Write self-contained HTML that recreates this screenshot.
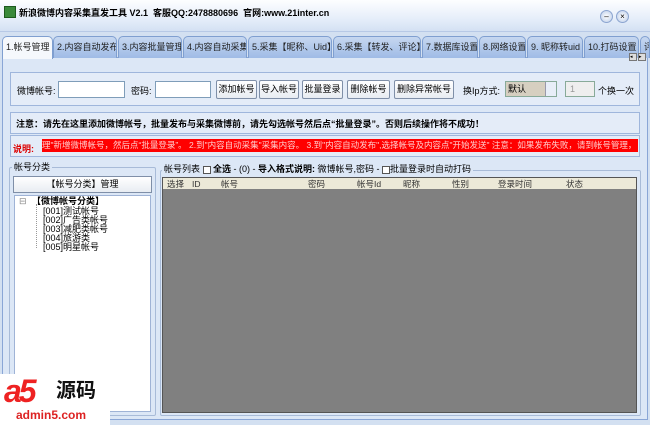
<!DOCTYPE html>
<html><head><meta charset="utf-8"><style>
*{margin:0;padding:0;box-sizing:border-box}
body{width:650px;height:425px;overflow:hidden;background:#d3e0f1;font-family:"Liberation Sans","Noto Sans CJK SC",sans-serif;font-size:9px;color:#000;position:relative}
.a{position:absolute}
.title{left:0;top:0;width:650px;height:32px;background:linear-gradient(#fdfeff,#e6eefa 60%,#d4e1f3);border-bottom:1px solid #b7c9e6}
.tab{position:absolute;top:36px;height:22px;background:linear-gradient(#c6d7f0,#9fbbe6);border:1px solid #7f9fd0;border-bottom:none;border-radius:5px 5px 0 0;font-size:9px;line-height:20px;padding-left:3px;white-space:nowrap;overflow:hidden;color:#222}
.panel{left:2px;top:57px;width:646px;height:363px;background:#dce7f6;border:1px solid #8aa6d6}
.box{position:absolute;border:1px solid #9fb6dc;background:#e4ecf8}
.inp{position:absolute;height:17px;background:#fff;border:1px solid #7f9db9}
.btn{position:absolute;top:80px;height:19px;border:1px solid #7f8fa8;border-radius:2px;background:linear-gradient(#fff,#e8ecf2);text-align:center;line-height:17px;font-size:9px}
.grp{position:absolute;border:1px solid #a8bbd8;border-radius:2px}
.lbl{position:absolute;background:#dce7f6;padding:0 2px;font-size:9px;line-height:11px}
.th{position:absolute;top:179px;font-size:8.5px;color:#333;line-height:10px}
.tree div{position:absolute;font-size:9px;white-space:nowrap;line-height:10px}
</style></head><body>
<div class="a title"></div>
<div class="a" style="left:4px;top:6px;width:12px;height:12px;background:#3a8a3a;border:1px solid #1d5a1d"></div>
<div class="a" style="left:19px;top:6px;font-size:9px;font-weight:bold;white-space:nowrap">新浪微博内容采集直发工具 V2.1 &nbsp;客服QQ:2478880696 &nbsp;官网:www.21inter.cn</div>
<div class="a" style="left:600px;top:10px;width:13px;height:13px;border-radius:50%;background:radial-gradient(#fff,#b9cbe8);border:1px solid #8ca5d0;font-size:8px;text-align:center;line-height:11px">–</div>
<div class="a" style="left:616px;top:10px;width:13px;height:13px;border-radius:50%;background:radial-gradient(#fff,#b9cbe8);border:1px solid #8ca5d0;font-size:8px;text-align:center;line-height:11px">×</div>

<div class="a panel"></div>
<div class="tab" style="left:2px;width:51px;background:#f5f8fc;height:23px;z-index:2">1.帐号管理</div>
<div class="tab" style="left:53px;width:64px">2.内容自动发布</div>
<div class="tab" style="left:118px;width:64px">3.内容批量管理</div>
<div class="tab" style="left:183px;width:64px">4.内容自动采集</div>
<div class="tab" style="left:248px;width:84px">5.采集【昵称、Uid】</div>
<div class="tab" style="left:333px;width:88px">6.采集【转发、评论】</div>
<div class="tab" style="left:422px;width:56px">7.数据库设置</div>
<div class="tab" style="left:479px;width:47px">8.网络设置</div>
<div class="tab" style="left:527px;width:56px">9. 昵称转uid</div>
<div class="tab" style="left:584px;width:55px">10.打码设置</div>
<div class="tab" style="left:640px;width:10px">评</div>
<div class="a" style="left:629px;top:53px;width:8px;height:8px;background:#ddd;border:1px solid #777;font-size:5px;line-height:6px">◂</div>
<div class="a" style="left:638px;top:53px;width:8px;height:8px;background:#ddd;border:1px solid #777;font-size:5px;line-height:6px">▸</div>

<div class="box" style="left:10px;top:72px;width:630px;height:34px"></div>
<div class="a" style="left:17px;top:84px">微博帐号:</div>
<div class="inp" style="left:58px;top:81px;width:67px"></div>
<div class="a" style="left:131px;top:84px">密码:</div>
<div class="inp" style="left:155px;top:81px;width:56px"></div>
<div class="btn" style="left:216px;width:41px">添加帐号</div>
<div class="btn" style="left:259px;width:40px">导入帐号</div>
<div class="btn" style="left:302px;width:41px">批量登录</div>
<div class="btn" style="left:347px;width:43px">删除帐号</div>
<div class="btn" style="left:394px;width:60px">删除异常帐号</div>
<div class="a" style="left:463px;top:84px">换Ip方式:</div>
<div class="a" style="left:505px;top:81px;width:52px;height:16px;background:#d6cfc0;border:1px solid #8a9;padding-left:2px;line-height:14px">默认</div>
<div class="a" style="left:545px;top:82px;width:11px;height:14px;background:#e8eef8;border-left:1px solid #99a"></div>
<div class="a" style="left:565px;top:81px;width:30px;height:16px;background:#eee;border:1px solid #8a9;color:#999;padding-left:4px;line-height:14px">1</div>
<div class="a" style="left:598px;top:84px">个换一次</div>

<div class="box" style="left:10px;top:112px;width:630px;height:22px"></div>
<div class="a" style="left:16px;top:117px;font-weight:bold;white-space:nowrap">注意：请先在这里添加微博帐号，批量发布与采集微博前，请先勾选帐号然后点“批量登录”。否则后续操作将不成功！</div>
<div class="box" style="left:10px;top:135px;width:630px;height:22px"></div>
<div class="a" style="left:13px;top:142px;color:#d00;font-weight:bold">说明:</div>
<div class="a" style="left:42px;top:139px;width:596px;height:13px;background:#f00;color:#fcc;font-size:8.5px;line-height:13px;white-space:nowrap;overflow:hidden">理"新增微博帐号，然后点“批量登录”。 2.到"内容自动采集"采集内容。 3.到"内容自动发布",选择帐号及内容点"开始发送" 注意：如果发布失败，请到帐号管理，</div>

<div class="grp" style="left:9px;top:167px;width:147px;height:249px"></div>
<div class="lbl" style="left:12px;top:162px">帐号分类</div>
<div class="a" style="left:13px;top:176px;width:139px;height:17px;border:1px solid #7f8fa8;background:linear-gradient(#fff,#e8ecf2);text-align:center;line-height:15px">【帐号分类】管理</div>
<div class="a" style="left:14px;top:195px;width:137px;height:217px;background:#fff;border:1px solid #9fb3d6"></div>
<div class="tree">
<div style="left:19px;top:196px;color:#888">⊟</div>
<div style="left:32px;top:196px;font-weight:bold">【微博帐号分类】</div>
<div style="left:43px;top:206px">[001]测试帐号</div>
<div style="left:43px;top:215px">[002]广告类帐号</div>
<div style="left:43px;top:224px">[003]减肥类帐号</div>
<div style="left:43px;top:233px">[004]旅游类</div>
<div style="left:43px;top:242px">[005]明星帐号</div>
</div>
<div class="a" style="left:36px;top:204px;width:1px;height:44px;border-left:1px dotted #999"></div>

<div class="grp" style="left:160px;top:170px;width:481px;height:246px"></div>
<div class="lbl" style="left:162px;top:164px;white-space:nowrap">帐号列表 <span style="display:inline-block;width:8px;height:8px;border:1px solid #555;background:#fff;vertical-align:middle"></span> <b>全选</b> - (0) - <b>导入格式说明:</b> 微博帐号,密码 - <span style="display:inline-block;width:8px;height:8px;border:1px solid #555;background:#fff;vertical-align:middle"></span>批量登录时自动打码</div>
<div class="a" style="left:162px;top:177px;width:475px;height:236px;background:#808080;border:1px solid #555"></div>
<div class="a" style="left:163px;top:178px;width:473px;height:11px;background:#ece9d8"></div>
<div class="th" style="left:167px">选择</div><div class="th" style="left:192px">ID</div><div class="th" style="left:221px">帐号</div><div class="th" style="left:308px">密码</div><div class="th" style="left:357px">帐号Id</div><div class="th" style="left:403px">昵称</div><div class="th" style="left:452px">性别</div><div class="th" style="left:498px">登录时间</div><div class="th" style="left:566px">状态</div>

<div class="a" style="left:0;top:374px;width:110px;height:51px;background:#fff"></div>
<div class="a" style="left:4px;top:374px;font-size:32px;font-weight:bold;font-style:italic;color:#e22;letter-spacing:-3px;line-height:34px">a5</div>
<div class="a" style="left:56px;top:380px;font-size:20px;font-weight:bold;color:#111;line-height:22px">源码</div>
<div class="a" style="left:16px;top:408px;font-size:12px;font-weight:bold;color:#d22;line-height:14px">admin5.com</div>
</body></html>
